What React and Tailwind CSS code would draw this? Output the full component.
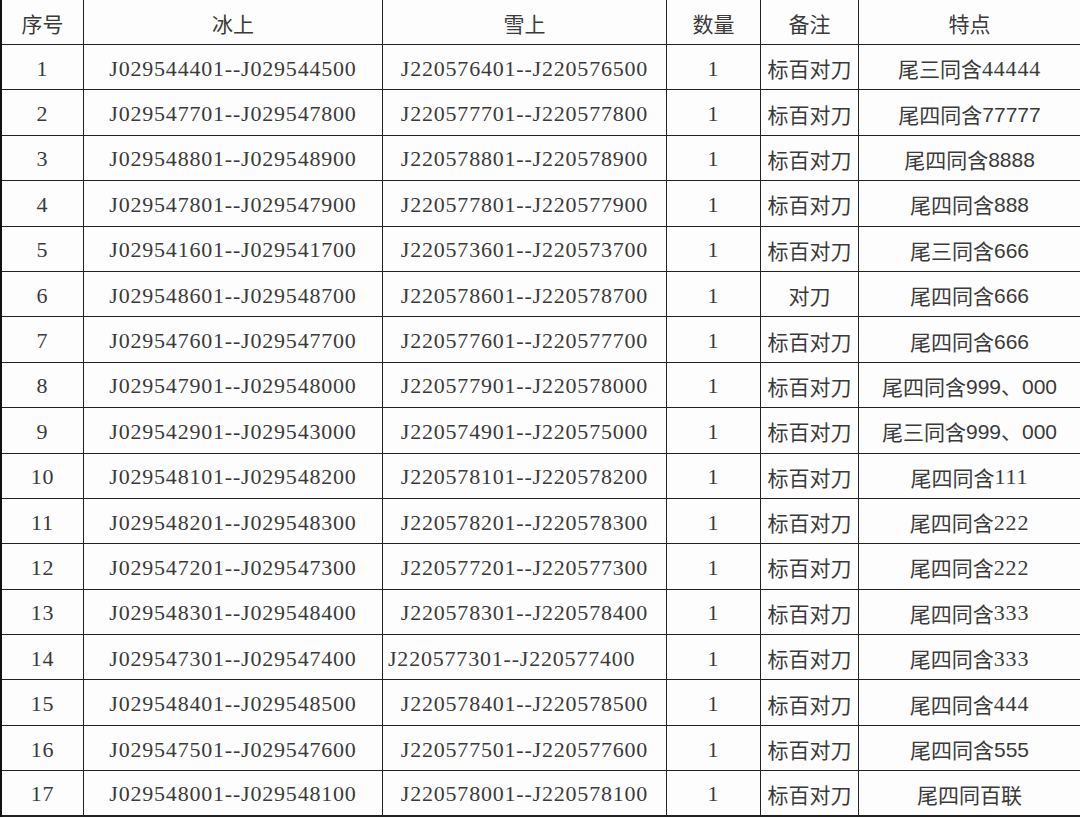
const rows = [
  ["1", "J029544401--J029544500", "J220576401--J220576500", "标百对刀", "尾三同含", "44444", "serif"],
  ["2", "J029547701--J029547800", "J220577701--J220577800", "标百对刀", "尾四同含", "77777", "sans"],
  ["3", "J029548801--J029548900", "J220578801--J220578900", "标百对刀", "尾四同含", "8888", "sans"],
  ["4", "J029547801--J029547900", "J220577801--J220577900", "标百对刀", "尾四同含", "888", "sans"],
  ["5", "J029541601--J029541700", "J220573601--J220573700", "标百对刀", "尾三同含", "666", "sans"],
  ["6", "J029548601--J029548700", "J220578601--J220578700", "对刀", "尾四同含", "666", "sans"],
  ["7", "J029547601--J029547700", "J220577601--J220577700", "标百对刀", "尾四同含", "666", "sans"],
  ["8", "J029547901--J029548000", "J220577901--J220578000", "标百对刀", "尾四同含", "999、000", "sans"],
  ["9", "J029542901--J029543000", "J220574901--J220575000", "标百对刀", "尾三同含", "999、000", "sans"],
  ["10", "J029548101--J029548200", "J220578101--J220578200", "标百对刀", "尾四同含", "111", "serif"],
  ["11", "J029548201--J029548300", "J220578201--J220578300", "标百对刀", "尾四同含", "222", "serif"],
  ["12", "J029547201--J029547300", "J220577201--J220577300", "标百对刀", "尾四同含", "222", "serif"],
  ["13", "J029548301--J029548400", "J220578301--J220578400", "标百对刀", "尾四同含", "333", "serif"],
  ["14", "J029547301--J029547400", "J220577301--J220577400", "标百对刀", "尾四同含", "333", "serif"],
  ["15", "J029548401--J029548500", "J220578401--J220578500", "标百对刀", "尾四同含", "444", "serif"],
  ["16", "J029547501--J029547600", "J220577501--J220577600", "标百对刀", "尾四同含", "555", "sans"],
  ["17", "J029548001--J029548100", "J220578001--J220578100", "标百对刀", "尾四同百联", "", "sans"],
];

const cjk = "font-['Noto_Sans_CJK_SC',sans-serif] text-[21px]";
const serif = "font-['Liberation_Serif','Noto_Sans_CJK_SC',serif] text-[22px] tracking-[0.8px]";
const sans = "font-['Liberation_Sans','Noto_Sans_CJK_SC',sans-serif] text-[21px]";

const Cell = ({ children, last, right, left }) => (
  <div
    className={
      "flex items-center pt-[3px] leading-none text-[#3a3a3a] border-[#222] " +
      (left ? "justify-start pl-[5px] " : "justify-center ") +
      (right ? "" : "border-r ") +
      (last ? "border-b-2" : "border-b")
    }
  >
    {children}
  </div>
);

const App = () => {
  const headers = ["序号", "冰上", "雪上", "数量", "备注", "特点"];
  return (
    <div className="w-[1080px] h-[818px] bg-[#fdfdfd] overflow-hidden">
      <div className="grid grid-cols-[82px_299px_284px_94px_98px_221px] grid-rows-[45px_repeat(17,45.4px)] border-l-2 border-[#111]">
        {headers.map((h, i) => (
          <Cell key={h} right={i === 5}>
            <span className={cjk + " text-[20px] pb-[1px]"}>{h}</span>
          </Cell>
        ))}
        {rows.map((r, idx) => {
          const last = idx === rows.length - 1;
          return [
            <Cell key={r[0] + "a"} last={last}>
              <span className={serif}>{r[0]}</span>
            </Cell>,
            <Cell key={r[0] + "b"} last={last}>
              <span className={serif}>{r[1]}</span>
            </Cell>,
            <Cell key={r[0] + "c"} last={last} left={r[0] === "14"}>
              <span className={serif}>{r[2]}</span>
            </Cell>,
            <Cell key={r[0] + "d"} last={last}>
              <span className={serif}>1</span>
            </Cell>,
            <Cell key={r[0] + "e"} last={last}>
              <span className={cjk}>{r[3]}</span>
            </Cell>,
            <Cell key={r[0] + "f"} last={last} right>
              <span className={cjk}>{r[4]}</span>
              {r[5] && <span className={r[6] === "serif" ? serif : sans}>{r[5]}</span>}
            </Cell>,
          ];
        })}
      </div>
    </div>
  );
};

export default App;
